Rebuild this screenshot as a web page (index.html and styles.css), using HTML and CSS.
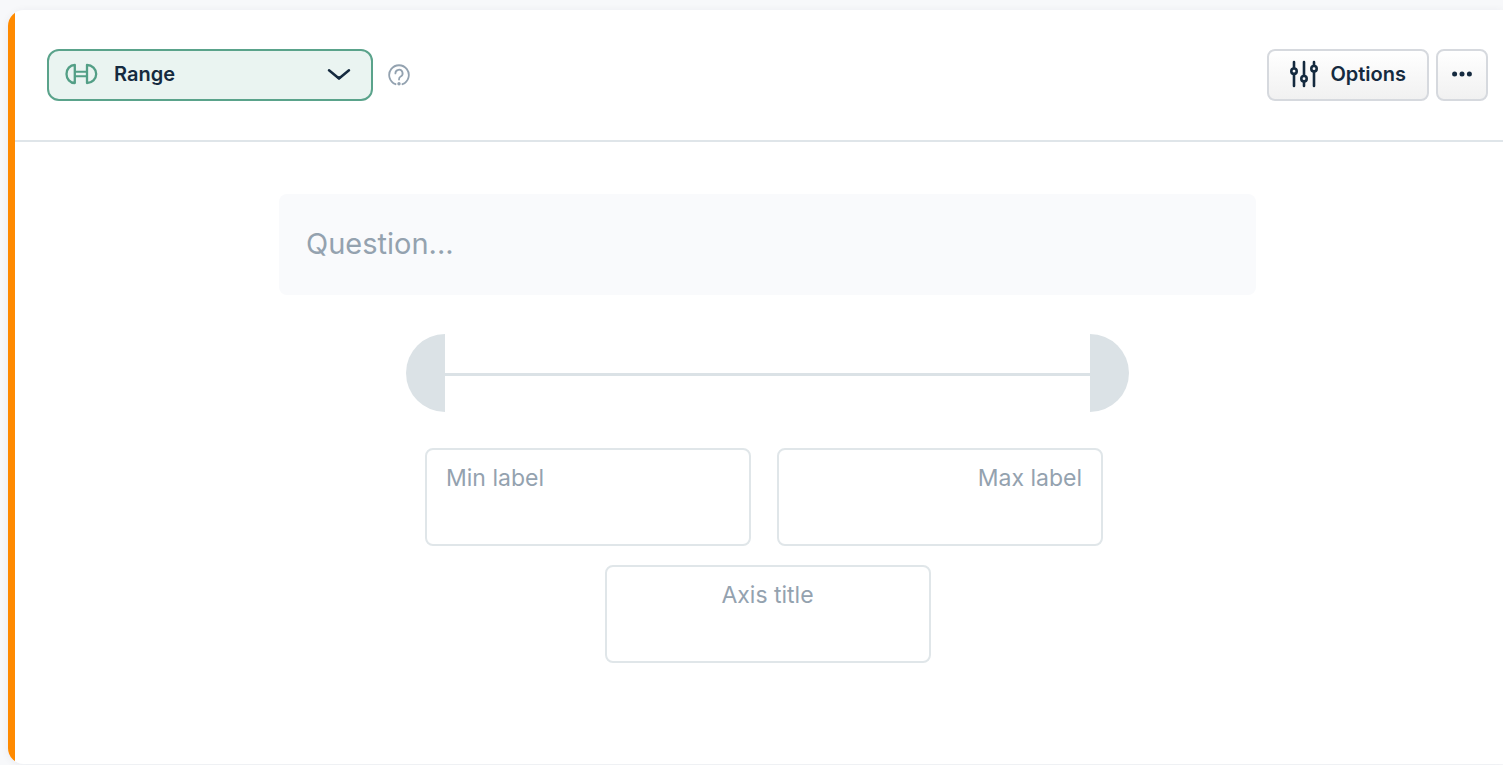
FILE: index.html
```html
<!DOCTYPE html>
<html lang="en">

<head>
    <meta charset="UTF-8">
    <meta name="viewport" content="width=device-width, initial-scale=1.0">
    <title>Range question</title>
    <link rel="stylesheet" href="styles.css">
</head>

<body>
    <main class="question-card">
        <header class="card-header">
            <div class="type-select">
                <svg class="type-icon" width="34" height="22" viewBox="0 0 34 22" fill="none" stroke="#539f86" stroke-width="2.300" stroke-linejoin="round" aria-hidden="true">
                    <path d="M10.800 2v18C6 20 2.500 16 2.500 11S6 2 10.800 2z" />
                    <path d="M23 2v18c5 0 9.200-4 9.200-9S28 2 23 2z" />
                    <path d="M10.800 8.800H23M10.800 13.300H23" stroke-width="2" />
                </svg>
                <select id="questionType" aria-label="Question type">
                    <option>Range</option>
                </select>
                <svg class="chevron" width="24" height="14" viewBox="0 0 24 14" fill="none" stroke="#152a3f" stroke-width="2.500" stroke-linecap="round" stroke-linejoin="round" aria-hidden="true">
                    <path d="M2 2.200l10 8.300L22 2.200" />
                    <path d="M9.500 9l2.500 2.200L14.500 9z" fill="#152a3f" stroke-width="1" />
                </svg>
            </div>
            <button class="help-button" type="button" aria-label="Help">
                <svg width="22" height="22" viewBox="0 0 22 22" fill="none" stroke="#93a2b0" stroke-width="1.800" stroke-linecap="round" aria-hidden="true">
                    <path d="M7.500 20.200a9.800 9.800 0 1 1 7 0" />
                    <path d="M7.400 9.400a3.600 3.600 0 1 1 5.300 3.100c-1.200.6-1.700 1.200-1.700 3" />
                    <circle cx="11" cy="19.800" r="1.700" fill="#93a2b0" stroke="none" />
                </svg>
            </button>
            <div class="header-actions">
                <button class="action-button options-button" type="button">
                    <svg width="28" height="28" viewBox="0 0 28 28" fill="none" stroke="#152a3f" stroke-width="2.600" stroke-linecap="round" aria-hidden="true">
                        <path d="M4 2v6M4 14v12M14 2v13.500M14 22v4M24 2v3.500M24 12v14" />
                        <circle cx="4" cy="11.200" r="2.700" />
                        <circle cx="14" cy="18.700" r="2.700" />
                        <circle cx="24" cy="8.700" r="2.700" />
                    </svg>
                    Options
                </button>
                <button class="action-button more-button" type="button" aria-label="More">
                    <svg width="20" height="6" viewBox="0 0 20 6" fill="#152a3f" aria-hidden="true">
                        <circle cx="2.600" cy="3" r="2.500" />
                        <circle cx="10" cy="3" r="2.500" />
                        <circle cx="17.400" cy="3" r="2.500" />
                    </svg>
                </button>
            </div>
        </header>

        <section class="card-body">
            <textarea class="question-input" rows="1" aria-label="Question" placeholder="Question..."></textarea>

            <div class="range-preview">
                <div class="range-end range-min"></div>
                <div class="range-line"></div>
                <div class="range-end range-max"></div>
            </div>

            <div class="label-row">
                <textarea class="label-input" aria-label="Min label" placeholder="Min label"></textarea>
                <textarea class="label-input align-right" aria-label="Max label" placeholder="Max label"></textarea>
            </div>
            <textarea class="label-input align-center" aria-label="Axis title" placeholder="Axis title"></textarea>
        </section>
    </main>
</body>

</html>
```

FILE: styles.css
```css
/* Reset */
* {
    margin: 0;
    padding: 0;
    box-sizing: border-box;
}

body {
    min-height: 100vh;
    padding: 10px 0 1px 8px;
    display: flex;
    background: #f7f8fa;
    font-family: Inter, sans-serif;
    color: #152a3f;
}

button, select, textarea {
    font: inherit;
    color: inherit;
}

/* Card */
.question-card {
    flex: 1;
    border-radius: 16px 0 0 16px;
    background: linear-gradient(to right, #ff8a00 7px, #ffffff 7px);
    box-shadow: 0 1px 8px rgba(21, 42, 63, 0.06);
}

.card-header {
    display: flex;
    align-items: center;
    margin-left: 7px;
    padding: 39px 15px 39px 32px;
    border-bottom: 2px solid #dfe5e9;
}

/* Question type */
.type-select {
    position: relative;
    width: 326px;
}

.type-select select {
    display: block;
    width: 100%;
    height: 52px;
    padding: 0 60px 2px 65px;
    appearance: none;
    border: 2px solid #5aa38b;
    border-radius: 12px;
    background: #eaf4f1;
    font-size: 20px;
    font-weight: 600;
    cursor: pointer;
}

.type-icon, .chevron {
    position: absolute;
    pointer-events: none;
}

.type-icon {
    top: 14px;
    left: 17px;
}

.chevron {
    top: 19px;
    right: 22px;
}

.help-button {
    display: flex;
    margin-left: 15px;
    border: none;
    background: none;
    cursor: pointer;
}

/* Header buttons */
.header-actions {
    display: flex;
    gap: 7px;
    margin-left: auto;
}

.action-button {
    display: flex;
    align-items: center;
    justify-content: center;
    height: 52px;
    padding-bottom: 2px;
    border: 2px solid #d6d9de;
    border-radius: 8px;
    background: linear-gradient(#ffffff, #f1f1f1);
    font-size: 20px;
    font-weight: 600;
    cursor: pointer;
}

.options-button {
    gap: 12px;
    padding-left: 21px;
    padding-right: 21px;
}

.more-button {
    width: 52px;
}

/* Card body */
.card-body {
    display: flex;
    flex-direction: column;
    align-items: center;
    padding: 52px 0 52px 24px;
}

textarea {
    display: block;
    resize: none;
    outline: none;
    overflow: hidden;
}

textarea::placeholder {
    color: #94a2af;
}

.question-input {
    width: 100%;
    max-width: 977px;
    height: 101px;
    padding: 32px 27px;
    border: none;
    border-radius: 8px;
    background: #f9fafc;
    font-size: 29px;
    line-height: 36px;
}

/* Range preview */
.range-preview {
    display: flex;
    align-items: center;
    width: 100%;
    max-width: 723px;
    margin: 39px 0 36px;
}

.range-end {
    width: 39px;
    height: 78px;
    background: #dbe2e6;
}

.range-min {
    border-radius: 39px 0 0 39px;
}

.range-max {
    border-radius: 0 39px 39px 0;
}

.range-line {
    flex: 1;
    height: 3px;
    margin-top: 2px;
    background: #dbe2e6;
}

/* Labels */
.label-row {
    display: flex;
    gap: 26px;
    margin-bottom: 19px;
    padding-right: 7px;
}

.label-input {
    width: 326px;
    height: 98px;
    padding: 13px 19px;
    border: 2px solid #e0e6e9;
    border-radius: 8px;
    background: #ffffff;
    font-size: 23px;
    line-height: 30px;
}

.align-right {
    text-align: right;
}

.align-center {
    text-align: center;
}
```
